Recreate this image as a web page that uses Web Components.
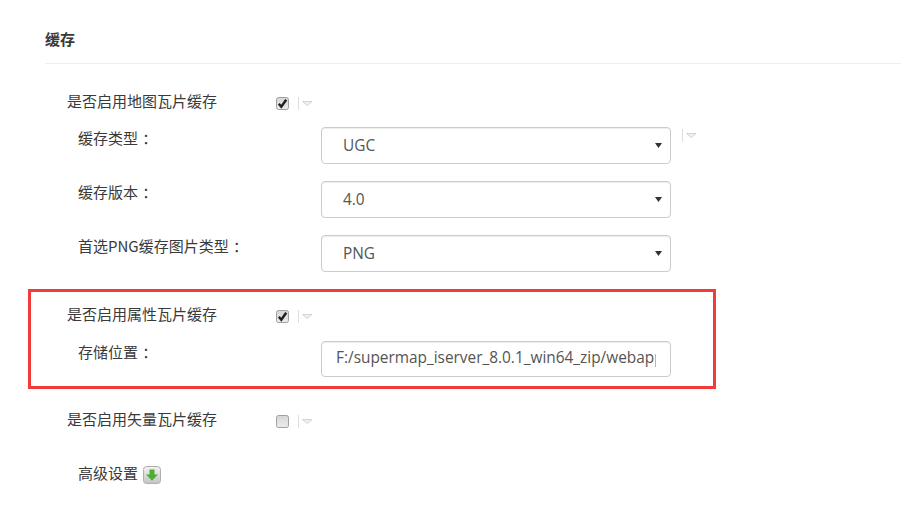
<!DOCTYPE html>
<html lang="zh">
<head>
<meta charset="utf-8">
<title>缓存</title>
<style>
  html, body { margin: 0; background: #fff; }
  body {
    font: 15px/24px "Noto Sans CJK SC", sans-serif;
    color: #3a3a3a;
    overflow: hidden;
  }
</style>
</head>
<body>
<settings-page>
  <section-title>缓存</section-title>

  <check-row style="margin-top:27px" checked>是否启用地图瓦片缓存</check-row>
  <field-row style="margin-top:12px" help>
    <span slot="label">缓存类型 ：</span>
    <select-box>UGC</select-box>
  </field-row>
  <field-row style="margin-top:17px">
    <span slot="label">缓存版本 ：</span>
    <select-box>4.0</select-box>
  </field-row>
  <field-row style="margin-top:17px">
    <span slot="label">首选PNG缓存图片类型 ：</span>
    <select-box>PNG</select-box>
  </field-row>

  <call-out style="margin-top:17px">
    <check-row checked>是否启用属性瓦片缓存</check-row>
    <field-row style="margin-top:13px">
      <span slot="label">存储位置 ：</span>
      <text-box>F:/supermap_iserver_8.0.1_win64_zip/webapps/iserver/output</text-box>
    </field-row>
  </call-out>

  <check-row style="margin-top:20px">是否启用矢量瓦片缓存</check-row>
  <more-link style="margin-top:30px">高级设置</more-link>
</settings-page>

<script>
class SettingsPage extends HTMLElement {
  constructor() {
    super();
    this.attachShadow({ mode: "open" });
    this.shadowRoot.innerHTML = `
      <style>
        :host { display: block; padding-left: 28px; }
      </style>
      <slot></slot>`;
  }
}

class SectionTitle extends HTMLElement {
  constructor() {
    super();
    this.attachShadow({ mode: "open" });
    this.shadowRoot.innerHTML = `
      <style>
        :host {
          display: block;
          margin-left: 17px;
          height: 64px;
          padding-top: 27px;
          box-sizing: border-box;
          border-bottom: 1px solid #eee;
          font-weight: 700;
        }
      </style>
      <slot></slot>`;
  }
}

class HelpToggle extends HTMLElement {
  constructor() {
    super();
    this.attachShadow({ mode: "open" });
    this.shadowRoot.innerHTML = `
      <style>
        :host { display: block; width: 16px; height: 16px; }
        svg { display: block; }
      </style>
      <svg width="16" height="16" viewBox="0 0 16 16">
        <path d="M.5 2v13" stroke="#ddd" fill="none"/>
        <path d="M4.500 6.500h9.500l-4.750 4z" fill="#f1f1f1" stroke="#d4d4d4"/>
      </svg>`;
  }
}

class CheckRow extends HTMLElement {
  constructor() {
    super();
    this.attachShadow({ mode: "open" });
    const mark = this.hasAttribute("checked")
      ? `<path d="M2.800 6.800l2.500 3L10.200 2.800" fill="none" stroke="#222" stroke-width="2.500"/>`
      : "";
    this.shadowRoot.innerHTML = `
      <style>
        :host {
          display: flex;
          align-items: center;
          height: 24px;
          margin-left: var(--inset, 39px);
        }
        .label { width: 209px; flex: none; padding-bottom: 4px; }
        svg { display: block; flex: none; margin-right: 9px; }
      </style>
      <div class="label"><slot></slot></div>
      <svg width="13" height="13" viewBox="0 0 13 13">
        <defs>
          <linearGradient id="fill" x1="0" y1="0" x2="0" y2="1">
            <stop offset="0" stop-color="#d6d6d6"/>
            <stop offset="1" stop-color="#ececec"/>
          </linearGradient>
        </defs>
        <rect x=".5" y=".5" width="12" height="12" rx="2" fill="url(#fill)" stroke="#a0a0a0"/>
        ${mark}
      </svg>
      <help-toggle></help-toggle>`;
  }
}

class FieldRow extends HTMLElement {
  constructor() {
    super();
    this.attachShadow({ mode: "open" });
    this.shadowRoot.innerHTML = `
      <style>
        :host {
          display: flex;
          align-items: flex-start;
          margin-left: var(--inset, 39px);
        }
        .label {
          width: 254px;
          box-sizing: border-box;
          padding-left: 11px;
          margin-top: -1px;
          flex: none;
          white-space: pre;
          word-spacing: 1px;
        }
        help-toggle { margin-left: 11px; }
      </style>
      <div class="label"><slot name="label"></slot></div>
      <slot></slot>
      ${this.hasAttribute("help") ? "<help-toggle></help-toggle>" : ""}`;
  }
}

class SelectBox extends HTMLElement {
  constructor() {
    super();
    this.attachShadow({ mode: "open" });
    this.shadowRoot.innerHTML = `
      <style>
        :host {
          display: flex;
          align-items: center;
          justify-content: space-between;
          width: 350px;
          height: 37px;
          box-sizing: border-box;
          padding: 0 8px 0 21px;
          border: 1px solid #ccc;
          border-radius: 4px;
          box-shadow: inset 0 1px 1px rgba(0,0,0,.075);
          font: 15.400px "Open Sans", sans-serif;
          color: #555;
        }
        .text { margin-top: -1px; }
        svg { display: block; }
      </style>
      <div class="text"><slot></slot></div>
      <svg width="7" height="5" viewBox="0 0 7 5"><path d="M0 0h7L3.500 5z" fill="#333"/></svg>`;
  }
}

class TextBox extends HTMLElement {
  constructor() {
    super();
    this.attachShadow({ mode: "open" });
    this.shadowRoot.innerHTML = `
      <style>
        :host {
          display: block;
          width: 350px;
          height: 36px;
          box-sizing: border-box;
          padding: 0 14px;
          border: 1px solid #ccc;
          border-radius: 4px;
          box-shadow: inset 0 1px 1px rgba(0,0,0,.075);
          font: 15.400px/31px "Open Sans", sans-serif;
          color: #555;
        }
        .clip { overflow: hidden; white-space: nowrap; }
      </style>
      <div class="clip"><slot></slot></div>`;
  }
}

class CallOut extends HTMLElement {
  constructor() {
    super();
    this.attachShadow({ mode: "open" });
    this.shadowRoot.innerHTML = `
      <style>
        :host {
          display: block;
          width: 688px;
          box-sizing: border-box;
          padding: 12px 0 9px;
          border: 3px solid #f33b3b;
          --inset: 36px;
        }
      </style>
      <slot></slot>`;
  }
}

class MoreLink extends HTMLElement {
  constructor() {
    super();
    this.attachShadow({ mode: "open" });
    this.shadowRoot.innerHTML = `
      <style>
        :host {
          display: flex;
          align-items: center;
          gap: 5px;
          height: 24px;
          margin-left: 50px;
        }
        .label { margin-top: -5px; }
        svg { display: block; }
      </style>
      <div class="label"><slot></slot></div>
      <svg width="18" height="18" viewBox="0 0 18 18">
        <defs>
          <linearGradient id="btn" x1="0" y1="0" x2="0" y2="1">
            <stop offset="0" stop-color="#f2f2f2"/>
            <stop offset="1" stop-color="#c4c4c4"/>
          </linearGradient>
        </defs>
        <rect x=".5" y=".5" width="17" height="17" rx="3" fill="url(#btn)" stroke="#b0b0b0"/>
        <path d="M6.500 3.500h5v5H15L9 14.800 3 8.500h3.500z" fill="#4fae32"/>
      </svg>`;
  }
}

customElements.define("settings-page", SettingsPage);
customElements.define("section-title", SectionTitle);
customElements.define("help-toggle", HelpToggle);
customElements.define("check-row", CheckRow);
customElements.define("field-row", FieldRow);
customElements.define("select-box", SelectBox);
customElements.define("text-box", TextBox);
customElements.define("call-out", CallOut);
customElements.define("more-link", MoreLink);
</script>
</body>
</html>
